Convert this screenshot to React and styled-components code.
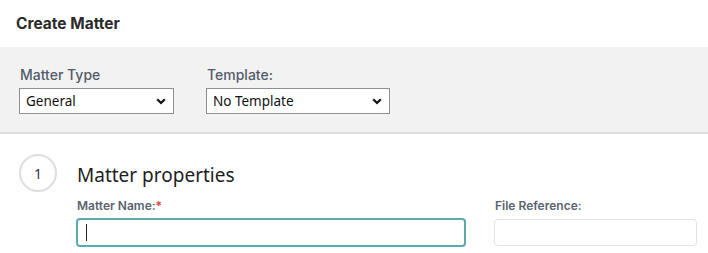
import React from 'react';
import styled, { createGlobalStyle } from 'styled-components';

const GlobalStyle = createGlobalStyle`
  html, body {
    margin: 0;
    padding: 0;
    background: #ffffff;
    font-family: "Noto Sans", "Open Sans", sans-serif;
  }
`;

const Chevron = () => (
  <svg width="10" height="7" viewBox="0 0 10 7">
    <path d="M1.2 1.2 L5 5 L8.8 1.2" fill="none" stroke="#111" strokeWidth="2.2" />
  </svg>
);

const Dropdown = ({ value, width }) => (
  <SelectBox $width={width}>
    <span>{value}</span>
    <Chevron />
  </SelectBox>
);

const App = () => {
  return (
    <>
      <GlobalStyle />
      <Header>
        <Title>Create Matter</Title>
      </Header>
      <Toolbar>
        <Field>
          <ToolLabel>Matter Type</ToolLabel>
          <Dropdown value="General" width={155} />
        </Field>
        <Field>
          <ToolLabel>Template:</ToolLabel>
          <Dropdown value="No Template" width={184} />
        </Field>
      </Toolbar>
      <Section>
        <StepCircle>1</StepCircle>
        <Content>
          <SectionTitle>Matter properties</SectionTitle>
          <FieldsRow>
            <FormField $width={390}>
              <FormLabel>
                Matter Name:<Required>*</Required>
              </FormLabel>
              <InputWrap>
                <TextInput $focused />
                <Caret />
              </InputWrap>
            </FormField>
            <FormField $width={203}>
              <FormLabel>File Reference:</FormLabel>
              <TextInput />
            </FormField>
          </FieldsRow>
        </Content>
      </Section>
    </>
  );
};

const Header = styled.div`
  height: 47px;
  display: flex;
  align-items: center;
  padding-left: 16px;
`;

const Title = styled.h1`
  margin: 0;
  font-family: Inter, "Noto Sans", sans-serif;
  font-size: 15.5px;
  font-weight: 700;
  color: #2b2b2b;
`;

const Toolbar = styled.div`
  display: flex;
  gap: 32px;
  padding: 19px 19px 18px;
  background: #f2f2f2;
  border-bottom: 2px solid #dcdcdc;
`;

const Field = styled.div`
  display: flex;
  flex-direction: column;
  gap: 4px;
`;

const ToolLabel = styled.label`
  font-family: Inter, "Noto Sans", sans-serif;
  font-size: 14px;
  line-height: 18px;
  font-weight: 500;
  color: #525c69;
  padding-left: 1px;
`;

const SelectBox = styled.div`
  box-sizing: border-box;
  width: ${(p) => p.$width}px;
  height: 26px;
  display: flex;
  align-items: center;
  justify-content: space-between;
  padding: 0 7px 0 6px;
  background: #ffffff;
  border: 1px solid #8f8f8f;
  font-size: 13.5px;
  color: #111;
`;

const Section = styled.div`
  display: flex;
  gap: 19px;
  padding: 20px 11px 0 19px;
`;

const StepCircle = styled.div`
  box-sizing: border-box;
  width: 38px;
  height: 38px;
  border-radius: 50%;
  border: 2px solid #dedede;
  display: flex;
  align-items: center;
  justify-content: center;
  font-size: 14px;
  color: #333;
`;

const Content = styled.div`
  display: flex;
  flex-direction: column;
  padding-top: 7px;
`;

const SectionTitle = styled.h2`
  margin: 0 0 10px 1px;
  font-size: 19px;
  line-height: 28px;
  font-weight: 400;
  color: #1e1e1e;
`;

const FieldsRow = styled.div`
  display: flex;
  gap: 28px;
`;

const FormField = styled.div`
  width: ${(p) => p.$width}px;
  display: flex;
  flex-direction: column;
  gap: 5px;
`;

const FormLabel = styled.label`
  font-family: Inter, "Noto Sans", sans-serif;
  font-size: 12px;
  line-height: 14px;
  font-weight: 600;
  color: #5a6370;
  padding-left: 1px;
`;

const Required = styled.span`
  color: #d9443a;
`;

const InputWrap = styled.div`
  position: relative;
`;

const TextInput = styled.input`
  box-sizing: border-box;
  display: block;
  width: 100%;
  height: ${(p) => (p.$focused ? 29 : 27)}px;
  margin: ${(p) => (p.$focused ? 0 : '1px 0 0')};
  border: ${(p) => (p.$focused ? '2px solid #5aaab0' : '1px solid #dfe3e8')};
  border-radius: 4px;
  background: #fff;
  outline: none;
`;

const Caret = styled.span`
  position: absolute;
  left: 10px;
  top: 6px;
  width: 1px;
  height: 17px;
  background: #222;
`;

export default App;
